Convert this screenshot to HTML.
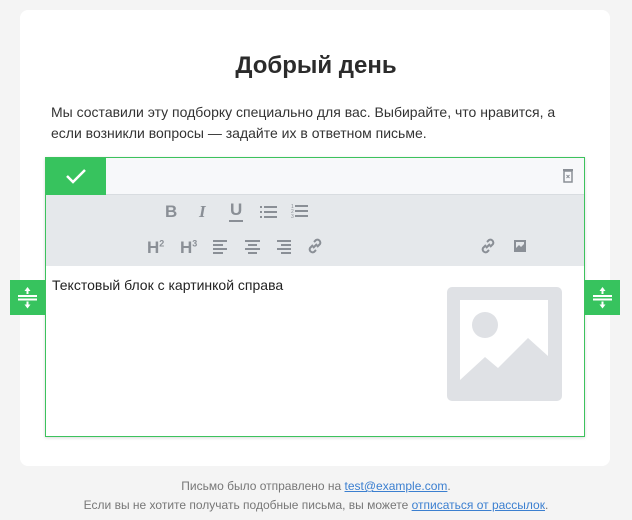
<!DOCTYPE html>
<html><head><meta charset="utf-8"><style>
*{margin:0;padding:0;box-sizing:border-box}
body{width:632px;height:520px;background:#f4f4f4;font-family:"Liberation Sans",sans-serif;position:relative;overflow:hidden}
.card{position:absolute;left:20px;top:10px;width:590px;height:456px;background:#fff;border-radius:8px}
h1{position:absolute;left:0;width:632px;top:52px;text-align:center;font-size:24px;font-weight:bold;color:#2b2b2b}
.p{position:absolute;left:51px;top:102px;width:520px;font-size:14px;line-height:21px;color:#333}
.ed{position:absolute;left:45px;top:157px;width:540px;height:280px;border:1px solid #3cc25d;background:#fff;box-shadow:0 1px 3px rgba(0,0,0,.15)}
.hd{position:absolute;left:0;top:0;width:538px;height:37px;background:#f7f8fa;border-bottom:1px solid #d8dce0}
.ck{position:absolute;left:0;top:0;width:60px;height:37px;background:#37c35e}
.tb{position:absolute;left:0;top:37px;width:538px;height:71px;background:#e5e8eb}
.tx{position:absolute;left:6px;top:119px;font-size:14px;color:#222}
.hn{position:absolute;top:280px;width:35px;height:35px;background:#37c35e}
.ic{position:absolute;color:#8a8f96;font-weight:bold;font-size:17px}
.ft{position:absolute;left:0;width:632px;text-align:center;font-size:12px;color:#777}
.ft a{color:#3b7fd0;text-decoration:underline}
</style></head><body>
<div class="card"></div>
<h1>Добрый день</h1>
<div class="p">Мы составили эту подборку специально для вас. Выбирайте, что нравится, а если возникли вопросы — задайте их в ответном письме.</div>
<div class="ed">
<div class="hd"><div class="ck"><svg width="60" height="37"><path d="M21 18l6 6 12-12" stroke="#fff" stroke-width="2.5" fill="none"/></svg></div>
<svg style="position:absolute;left:516px;top:10px" width="12" height="16"><rect x="2" y="3" width="8" height="11" fill="none" stroke="#8a8f96" stroke-width="1.5"/><rect x="1" y="1" width="10" height="2" fill="#8a8f96"/><path d="M4.5 7l3 3M7.5 7l-3 3" stroke="#8a8f96"/></svg></div>
<div class="tb">
<div class="ic" style="left:119px;top:7px">B</div>
<div class="ic" style="left:153px;top:7px;font-style:italic;font-family:'Liberation Serif'">I</div>
<div class="ic" style="left:184px;top:5px">U</div>
<div style="position:absolute;left:183px;top:25px;width:14px;height:2px;background:#8a8f96"></div>
<svg style="position:absolute;left:214px;top:10px" width="18" height="14" fill="#8a8f96"><rect x="0" y="1" width="2" height="2"/><rect x="4" y="1" width="13" height="2"/><rect x="0" y="6" width="2" height="2"/><rect x="4" y="6" width="13" height="2"/><rect x="0" y="11" width="2" height="2"/><rect x="4" y="11" width="13" height="2"/></svg>
<svg style="position:absolute;left:245px;top:8px" width="18" height="16" fill="#8a8f96"><text x="0" y="5" font-size="5">1</text><text x="0" y="10" font-size="5">2</text><text x="0" y="15" font-size="5">3</text><rect x="4" y="2" width="13" height="2"/><rect x="4" y="7" width="13" height="2"/><rect x="4" y="12" width="13" height="2"/></svg>
<div class="ic" style="left:101px;top:43px">H<sup style="font-size:9px">2</sup></div>
<div class="ic" style="left:134px;top:43px">H<sup style="font-size:9px">3</sup></div>
<svg style="position:absolute;left:167px;top:45px" width="16" height="14" fill="#8a8f96"><rect y="0" width="14" height="2"/><rect y="4" width="10" height="2"/><rect y="8" width="14" height="2"/><rect y="12" width="10" height="2"/></svg>
<svg style="position:absolute;left:199px;top:45px" width="16" height="14" fill="#8a8f96"><rect y="0" width="15" height="2"/><rect x="3" y="4" width="9" height="2"/><rect y="8" width="15" height="2"/><rect x="3" y="12" width="9" height="2"/></svg>
<svg style="position:absolute;left:230px;top:45px" width="16" height="14" fill="#8a8f96"><rect x="1" y="0" width="14" height="2"/><rect x="5" y="4" width="10" height="2"/><rect x="1" y="8" width="14" height="2"/><rect x="5" y="12" width="10" height="2"/></svg>
<svg style="position:absolute;left:261px;top:43px" width="16" height="16" fill="none" stroke="#8a8f96" stroke-width="2"><path d="M7 4l2-2a3 3 0 014 4l-3 3M9 12l-2 2a3 3 0 01-4-4l3-3M6 10l4-4"/></svg>
<svg style="position:absolute;left:434px;top:43px" width="16" height="16" fill="none" stroke="#8a8f96" stroke-width="2"><path d="M7 4l2-2a3 3 0 014 4l-3 3M9 12l-2 2a3 3 0 01-4-4l3-3M6 10l4-4"/></svg>
<svg style="position:absolute;left:468px;top:45px" width="12" height="12"><rect width="12" height="12" fill="#8a8f96"/><rect x="2" y="2" width="8" height="6" fill="#e5e8eb"/><path d="M2 8l3-3 2 2 3-3v4z" fill="#8a8f96"/></svg>
</div>
<div class="tx">Текстовый блок с картинкой справа</div>
<svg style="position:absolute;left:401px;top:129px" width="115" height="114"><rect width="115" height="114" rx="5" fill="#dfe1e5"/><rect x="13" y="13" width="88" height="81" fill="#fff"/><circle cx="38" cy="38" r="13" fill="#dfe1e5"/><path d="M13 94L13 93L38 70L51 81L81 51L101 69L101 94Z" fill="#dfe1e5"/></svg>
</div>
<div class="hn" style="left:10px"><svg width="35" height="35" stroke="#fff" stroke-width="2" fill="#fff"><path d="M8 16h19M8 19.5h19"/><path d="M17.5 9v5M17.5 21.5v5" stroke-width="2"/><path d="M14.5 11l3-4 3 4zM14.5 24.5l3 4 3-4z" stroke="none"/></svg></div>
<div class="hn" style="left:585px"><svg width="35" height="35" stroke="#fff" stroke-width="2" fill="#fff"><path d="M8 16h19M8 19.5h19"/><path d="M17.5 9v5M17.5 21.5v5" stroke-width="2"/><path d="M14.5 11l3-4 3 4zM14.5 24.5l3 4 3-4z" stroke="none"/></svg></div>
<div class="ft" style="top:479px">Письмо было отправлено на <a>test@example.com</a>.</div>
<div class="ft" style="top:498px">Если вы не хотите получать подобные письма, вы можете <a>отписаться от рассылок</a>.</div>
</body></html>
